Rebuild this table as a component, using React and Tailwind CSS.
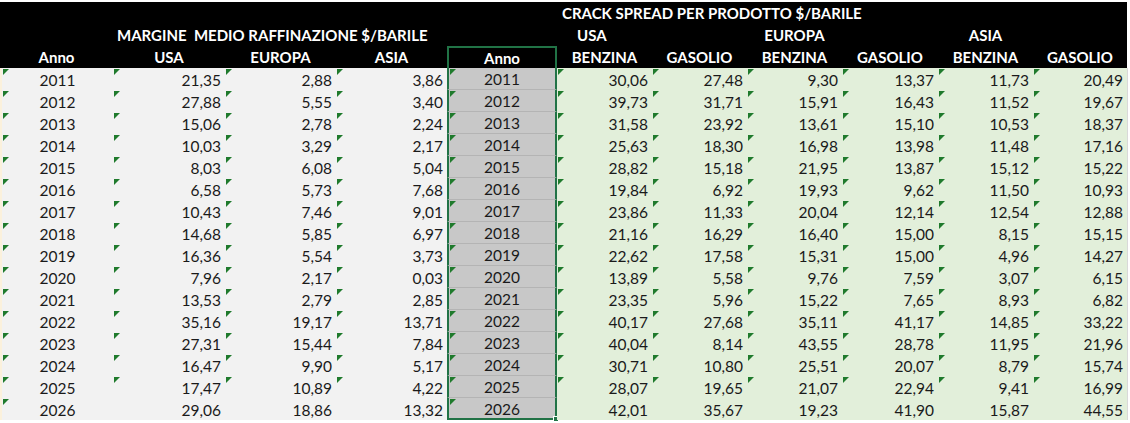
import React from 'react';

const left = [
  ['2011', '21,35', '2,88', '3,86'],
  ['2012', '27,88', '5,55', '3,40'],
  ['2013', '15,06', '2,78', '2,24'],
  ['2014', '10,03', '3,29', '2,17'],
  ['2015', '8,03', '6,08', '5,04'],
  ['2016', '6,58', '5,73', '7,68'],
  ['2017', '10,43', '7,46', '9,01'],
  ['2018', '14,68', '5,85', '6,97'],
  ['2019', '16,36', '5,54', '3,73'],
  ['2020', '7,96', '2,17', '0,03'],
  ['2021', '13,53', '2,79', '2,85'],
  ['2022', '35,16', '19,17', '13,71'],
  ['2023', '27,31', '15,44', '7,84'],
  ['2024', '16,47', '9,90', '5,17'],
  ['2025', '17,47', '10,89', '4,22'],
  ['2026', '29,06', '18,86', '13,32'],
];

const right = [
  ['30,06', '27,48', '9,30', '13,37', '11,73', '20,49'],
  ['39,73', '31,71', '15,91', '16,43', '11,52', '19,67'],
  ['31,58', '23,92', '13,61', '15,10', '10,53', '18,37'],
  ['25,63', '18,30', '16,98', '13,98', '11,48', '17,16'],
  ['28,82', '15,18', '21,95', '13,87', '15,12', '15,22'],
  ['19,84', '6,92', '19,93', '9,62', '11,50', '10,93'],
  ['23,86', '11,33', '20,04', '12,14', '12,54', '12,88'],
  ['21,16', '16,29', '16,40', '15,00', '8,15', '15,15'],
  ['22,62', '17,58', '15,31', '15,00', '4,96', '14,27'],
  ['13,89', '5,58', '9,76', '7,59', '3,07', '6,15'],
  ['23,35', '5,96', '15,22', '7,65', '8,93', '6,82'],
  ['40,17', '27,68', '35,11', '41,17', '14,85', '33,22'],
  ['40,04', '8,14', '43,55', '28,78', '11,95', '21,96'],
  ['30,71', '10,80', '25,51', '20,07', '8,79', '15,74'],
  ['28,07', '19,65', '21,07', '22,94', '9,41', '16,99'],
  ['42,01', '35,67', '19,23', '41,90', '15,87', '44,55'],
];

// triangolino verde di Excel (numero memorizzato come testo)
const Tri = () => (
  <span className="absolute top-[1px] left-[1px] w-0 h-0 border-t-[6px] border-r-[6px] border-t-[#1f7a2c] border-r-transparent" />
);

const App = () => {
  return (
    <div className="w-[1130px] h-[423px] bg-white pt-[2px] text-[15px] leading-none text-[#1a1a1a] font-['Lato',sans-serif] overflow-hidden">
      <div className="grid grid-cols-[113px_112px_111px_111px_110px_95px_95px_95px_96px_95px_94px_3px] auto-rows-[22px]">
        {/* riga titolo 1 */}
        <div className="col-span-5 bg-black" />
        <div className="col-span-6 bg-black text-white font-bold flex items-center pl-[5px] whitespace-nowrap">
          CRACK SPREAD PER PRODOTTO $/BARILE
        </div>
        <div />

        {/* riga titolo 2 */}
        <div className="bg-black" />
        <div className="col-span-3 bg-black text-white font-bold flex items-center pl-[4px] whitespace-pre">
          MARGINE  MEDIO RAFFINAZIONE $/BARILE
        </div>
        <div className="bg-black" />
        <div className="bg-black text-white font-bold flex items-center pl-[20px]">USA</div>
        <div className="bg-black" />
        <div className="bg-black text-white font-bold flex items-center justify-center">EUROPA</div>
        <div className="bg-black" />
        <div className="bg-black text-white font-bold flex items-center justify-center">ASIA</div>
        <div className="bg-black" />
        <div />

        {/* riga titolo 3 */}
        {['Anno', 'USA', 'EUROPA', 'ASIA'].map((h) => (
          <div key={h} className="bg-black text-white font-bold flex items-center justify-center pt-[1px]">{h}</div>
        ))}
        <div className="bg-black text-white font-bold flex items-center justify-center border-x-2 border-t-2 border-[#217346]">
          Anno
        </div>
        {['BENZINA', 'GASOLIO', 'BENZINA', 'GASOLIO', 'BENZINA', 'GASOLIO'].map((h, i) => (
          <div key={i} className="bg-black text-white font-bold flex items-center justify-center pt-[1px]">{h}</div>
        ))}
        <div />

        {/* dati */}
        {left.map((row, r) => {
          const last = r === left.length - 1;
          return (
            <React.Fragment key={row[0]}>
              <div className="relative bg-[#f2f2f2] border-l-2 border-[#fbf1dc] flex items-center justify-center pt-[3px] text-[15.5px]">
                <Tri />
                {row[0]}
              </div>
              {row.slice(1).map((v, c) => (
                <div key={c} className="relative bg-[#f2f2f2] flex items-center justify-end pr-[4px] pt-[3px] text-[15.5px]">
                  {!last && <Tri />}
                  {v}
                </div>
              ))}
              <div
                className={`relative bg-[#c8c8c8] flex items-center justify-center pt-[3px] text-[15.5px] border-x-2 border-[#217346] ${
                  last ? 'border-b-2' : 'border-b border-b-[#b4b4b4]'
                }`}
              >
                <Tri />
                {row[0]}
                {last && <span className="absolute -right-[4px] -bottom-[4px] w-[6px] h-[6px] bg-[#217346] border border-white" />}
              </div>
              {right[r].map((v, c) => (
                <div key={c} className="relative bg-[#e2efda] flex items-center justify-end pr-[4px] pt-[3px] text-[15.5px]">
                  {!last && <Tri />}
                  {v}
                </div>
              ))}
              <div className="bg-white border-l border-[#d9d9d9]" />
            </React.Fragment>
          );
        })}
      </div>
    </div>
  );
};

export default App;
